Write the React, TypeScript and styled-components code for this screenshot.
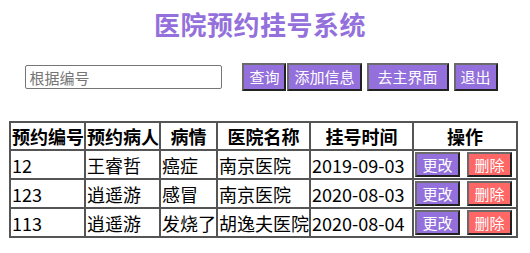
import { createGlobalStyle, styled } from 'styled-components';

type Record = {
  id: string;
  patient: string;
  illness: string;
  hospital: string;
  time: string;
};

const records: Record[] = [
  { id: '12', patient: '王睿哲', illness: '癌症', hospital: '南京医院', time: '2019-09-03' },
  { id: '123', patient: '逍遥游', illness: '感冒', hospital: '南京医院', time: '2020-08-03' },
  { id: '113', patient: '逍遥游', illness: '发烧了', hospital: '胡逸夫医院', time: '2020-08-04' },
];

const columns = [
  { title: '预约编号', width: 75 },
  { title: '预约病人', width: 75 },
  { title: '病情', width: 57 },
  { title: '医院名称', width: 93 },
  { title: '挂号时间', width: 103 },
  { title: '操作', width: 104 },
];

const App = () => {
  return (
    <>
      <GlobalStyle />
      <Page>
        <Title>医院预约挂号系统</Title>
        <Toolbar>
          <SearchInput placeholder="根据编号" />
          <ButtonGroup>
            <ActionButton>查询</ActionButton>
            <ActionButton>添加信息</ActionButton>
            <ActionButton $wide>去主界面</ActionButton>
            <ActionButton>退出</ActionButton>
          </ButtonGroup>
        </Toolbar>
        <Table>
          <colgroup>
            {columns.map(col => (
              <col key={col.title} style={{ width: col.width }} />
            ))}
          </colgroup>
          <thead>
            <tr>
              {columns.map(col => (
                <Th key={col.title}>{col.title}</Th>
              ))}
            </tr>
          </thead>
          <tbody>
            {records.map(item => (
              <tr key={item.id}>
                <Td>{item.id}</Td>
                <Td>{item.patient}</Td>
                <Td>{item.illness}</Td>
                <Td>{item.hospital}</Td>
                <Td>{item.time}</Td>
                <OpCell>
                  <RowButton>更改</RowButton>
                  <RowButton $danger>删除</RowButton>
                </OpCell>
              </tr>
            ))}
          </tbody>
        </Table>
      </Page>
    </>
  );
};

const GlobalStyle = createGlobalStyle`
  body {
    margin: 0;
    background: #fff;
    font-family: "Noto Sans CJK SC", "Noto Sans", sans-serif;
  }
`;

const Page = styled.div`
  width: 530px;
  display: flex;
  flex-direction: column;
  align-items: center;
`;

const Title = styled.h1`
  margin: 7px 10px 0 0;
  font-size: 26px;
  line-height: 34px;
  font-weight: 700;
  color: #9370db;
  letter-spacing: 0.5px;
`;

const Toolbar = styled.div`
  display: flex;
  align-items: center;
  margin: 22px 0 0 -6px;
`;

const SearchInput = styled.input`
  width: 197px;
  height: 24px;
  box-sizing: border-box;
  border: 1px solid #767676;
  border-radius: 2px;
  padding: 0 3px;
  font-family: "Noto Sans CJK SC", sans-serif;
  font-size: 15px;
  outline: none;
  &::placeholder {
    color: #757575;
  }
`;

const ButtonGroup = styled.div`
  margin-left: 20px;
  display: flex;
  align-items: center;
`;

const ActionButton = styled.button<{ $wide?: boolean }>`
  box-sizing: border-box;
  height: 28px;
  padding: 0 ${p => (p.$wide ? '9px' : '5px')};
  margin-right: 1px;
  background: #9370db;
  color: #fff;
  border: 2px solid;
  border-color: #6a6a6a #222 #222 #6a6a6a;
  font-family: "Noto Sans CJK SC", sans-serif;
  font-size: 15px;
  line-height: 20px;
  cursor: pointer;
  &:nth-child(2),
  &:nth-child(3) {
    margin-right: 5px;
  }
`;

const Table = styled.table`
  margin: 30px 3px 0 0;
  width: 509px;
  table-layout: fixed;
  border: 1px solid #555;
  border-spacing: 0;
  font-size: 18px;
  color: #000;
`;

const Th = styled.th`
  border: 1px solid #555;
  padding: 0 1px;
  height: 26px;
  line-height: 24px;
  font-weight: 700;
  text-align: center;
  white-space: nowrap;
  overflow: hidden;
`;

const Td = styled.td`
  border: 1px solid #555;
  padding: 0 1px;
  height: 27px;
  line-height: 24px;
  white-space: nowrap;
  overflow: hidden;
`;

const OpCell = styled(Td)`
  font-size: 0;
`;

const RowButton = styled.button<{ $danger?: boolean }>`
  box-sizing: border-box;
  width: 45px;
  height: 25px;
  margin: 0;
  padding: 0;
  background: ${p => (p.$danger ? '#ff6666' : '#9370db')};
  color: #fff;
  border: 2px solid;
  border-color: #6a6a6a #222 #222 #6a6a6a;
  font-family: "Noto Sans CJK SC", sans-serif;
  font-size: 15px;
  line-height: 18px;
  vertical-align: middle;
  cursor: pointer;
  & + & {
    margin-left: 7px;
  }
`;

export default App;
